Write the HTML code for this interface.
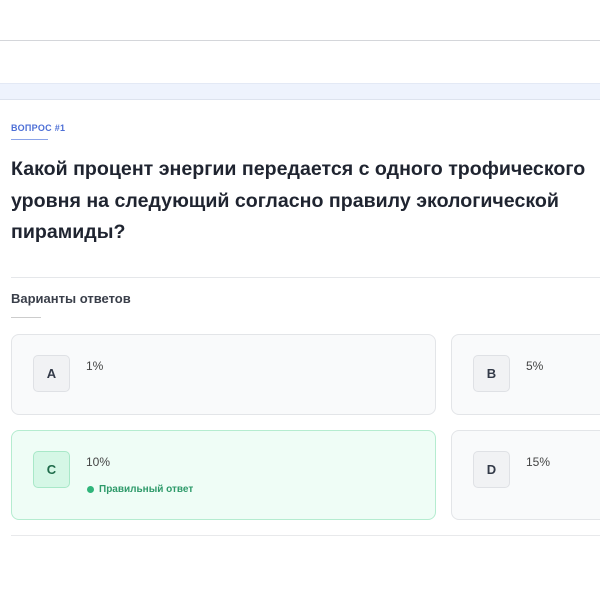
<!DOCTYPE html>
<html><head><meta charset="utf-8"><style>
*{margin:0;padding:0;box-sizing:border-box}
body{width:600px;height:600px;background:#fff;font-family:"Liberation Sans","DejaVu Sans",sans-serif;position:relative;overflow:hidden}
.a{position:absolute}
.card{position:absolute;border:1px solid #e3e5e8;border-radius:8px;background:#f9fafb}
.lt{position:absolute;left:21px;top:20px;width:37px;height:37px;border:1px solid #dfe1e5;border-radius:5px;background:#f1f2f4;font-weight:bold;font-size:13px;color:#333a48;display:flex;align-items:center;justify-content:center}
.val{position:absolute;left:74px;top:24px;font-size:12px;color:#444}
</style></head><body>
<div class="a" style="left:0;top:40px;width:600px;height:1px;background:#d4d6da"></div>
<div class="a" style="left:0;top:83px;width:600px;height:17px;background:#eef3fd;border-top:1px solid #e3e9f5;border-bottom:1px solid #dde3ee"></div>
<div class="a" style="left:11px;top:123px;font-size:9px;font-weight:bold;color:#4d6fd6;letter-spacing:0.3px">ВОПРОС #1</div>
<div class="a" style="left:11px;top:139px;width:37px;height:1px;background:#8aa3e8"></div>
<div class="a" style="left:11px;top:154px;width:589px;font-size:19.6px;font-weight:bold;color:#1f2430;line-height:31.5px">Какой процент энергии передается с одного трофического уровня на следующий согласно правилу экологической пирамиды?</div>
<div class="a" style="left:11px;top:277px;width:589px;height:1px;background:#e5e7ea"></div>
<div class="a" style="left:11px;top:291px;font-size:13px;font-weight:bold;color:#3a3f4a">Варианты ответов</div>
<div class="a" style="left:11px;top:317px;width:30px;height:1px;background:#ccc"></div>
<div class="card" style="left:11px;top:334px;width:425px;height:81px"><div class="lt">A</div><div class="val">1%</div></div>
<div class="card" style="left:451px;top:334px;width:170px;height:81px"><div class="lt">B</div><div class="val">5%</div></div>
<div class="card" style="left:11px;top:430px;width:425px;height:90px;background:#effdf6;border-color:#b5ecd0"><div class="lt" style="background:#d5f7e6;border-color:#a8e8c8;color:#1e6b4a">C</div><div class="val">10%</div>
<div class="a" style="left:75px;top:55px;width:7px;height:7px;border-radius:50%;background:#2fb57a"></div>
<div class="a" style="left:87px;top:53px;font-size:10px;font-weight:bold;color:#2e9a6a">Правильный ответ</div></div>
<div class="card" style="left:451px;top:430px;width:170px;height:90px"><div class="lt">D</div><div class="val">15%</div></div>
<div class="a" style="left:11px;top:535px;width:589px;height:1px;background:#e8e9eb"></div>
</body></html>
